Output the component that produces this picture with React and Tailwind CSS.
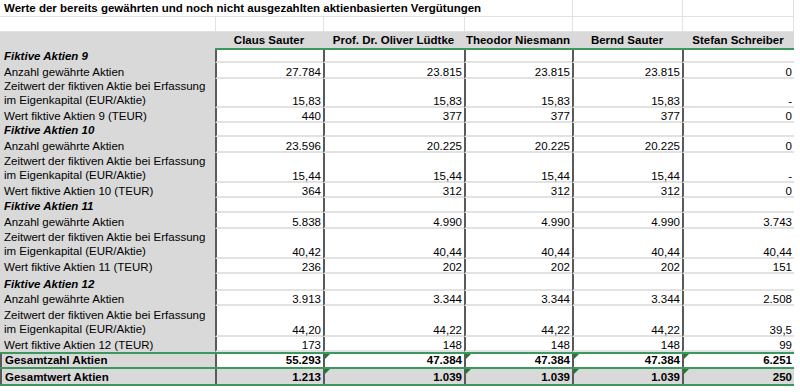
import React from "react";

const W = ["w-[108px]", "w-[141px]", "w-[108px]", "w-[110px]", "w-[112px]"];
const names = ["Claus Sauter", "Prof. Dr. Oliver Lüdtke", "Theodor Niesmann", "Bernd Sauter", "Stefan Schreiber"];

const groups = [
  {
    n: 9,
    h: ["h-[13px]", "h-[16px]", "h-[29px]", "h-[15px]"],
    a: ["27.784", "23.815", "23.815", "23.815", "0"],
    z: ["15,83", "15,83", "15,83", "15,83", "-"],
    w: ["440", "377", "377", "377", "0"],
  },
  {
    n: 10,
    h: ["h-[14px]", "h-[16px]", "h-[30px]", "h-[15px]"],
    a: ["23.596", "20.225", "20.225", "20.225", "0"],
    z: ["15,44", "15,44", "15,44", "15,44", "-"],
    w: ["364", "312", "312", "312", "0"],
  },
  {
    n: 11,
    h: ["h-[15px]", "h-[16px]", "h-[30px]", "h-[15px]"],
    a: ["5.838", "4.990", "4.990", "4.990", "3.743"],
    z: ["40,42", "40,44", "40,44", "40,44", "40,44"],
    w: ["236", "202", "202", "202", "151"],
  },
  {
    n: 12,
    h: ["h-[17px]", "h-[15px]", "h-[31px]", "h-[15px]"],
    a: ["3.913", "3.344", "3.344", "3.344", "2.508"],
    z: ["44,20", "44,22", "44,22", "44,22", "39,5"],
    w: ["173", "148", "148", "148", "99"],
  },
];

function Row({ h, label, labelClass = "", values, zeit = false }) {
  return (
    <div className={`flex ${h}`}>
      <div className={`w-[215px] shrink-0 bg-[#d9d9d9] flex items-end pl-[4px] ${labelClass}`}>
        {zeit ? (
          <div className="leading-[14px] mb-[1px]">
            <div>Zeitwert der fiktiven Aktie bei Erfassung</div>
            <div>im Eigenkapital (EUR/Aktie)</div>
          </div>
        ) : (
          <span className="leading-[12px] mb-[1px] whitespace-nowrap">{label}</span>
        )}
      </div>
      {W.map((w, i) => (
        <div
          key={i}
          className={`${w} shrink-0 bg-white border-l-2 border-l-[#5a5a5a] border-b-2 border-b-[#e2e2e2] flex items-end justify-end pr-[2px]`}
        >
          <span className="leading-[12px] -mb-[1px]">{values ? values[i] : ""}</span>
        </div>
      ))}
    </div>
  );
}

function TotalRow({ h, label, values, gray, top }) {
  return (
    <div className={`flex ${h} ${top ? "border-t-2" : ""} border-b-2 border-[#3a9a5e] w-[794px]`}>
      <div className="w-[215px] shrink-0 bg-[#d9d9d9] border-l-2 border-l-[#5a5a5a] flex items-end pl-[3px] font-bold">
        <span className="leading-[12px] mb-[1px]">{label}</span>
      </div>
      {W.map((w, i) => (
        <div
          key={i}
          className={`${w} shrink-0 relative ${gray ? "bg-[#d9d9d9]" : "bg-white"} border-l-2 border-l-[#5a5a5a] flex items-end justify-end pr-[2px] font-bold`}
        >
          {i > 0 && (
            <div className="absolute left-0 top-0 w-0 h-0 border-t-[5px] border-t-[#1e7b34] border-r-[5px] border-r-transparent" />
          )}
          <span className="leading-[12px] mb-[1px]">{values[i]}</span>
        </div>
      ))}
    </div>
  );
}

export default function App() {
  return (
    <div
      className="w-[800px] h-[392px] bg-white text-black text-[11.5px] overflow-hidden"
      style={{ fontFamily: '"Liberation Sans", Arial, sans-serif' }}
    >
      {/* title row */}
      <div className="flex h-[17px] w-[794px] border-b border-[#e2e2e2]">
        <div className="w-[572px] shrink-0 flex items-center pl-[4px] font-bold">
          <span className="leading-[12px] whitespace-nowrap">
            Werte der bereits gewährten und noch nicht ausgezahlten aktienbasierten Vergütungen
          </span>
        </div>
        <div className="w-[110px] shrink-0 border-l border-[#e2e2e2]" />
        <div className="w-[112px] shrink-0 border-l border-r border-[#e2e2e2]" />
      </div>
      {/* empty row */}
      <div className="flex h-[15px] w-[794px] border-b border-[#e2e2e2]">
        <div className="w-[215px] shrink-0" />
        {W.map((w, i) => (
          <div key={i} className={`${w} shrink-0 border-l border-[#e2e2e2] ${i === 4 ? "border-r" : ""}`} />
        ))}
      </div>
      {/* header row */}
      <div className="flex h-[16px] w-[794px] bg-[#d9d9d9] font-bold">
        <div className="w-[215px] shrink-0" />
        {W.map((w, i) => (
          <div key={i} className={`${w} shrink-0 flex items-center justify-center`}>
            <span className="leading-[12px] whitespace-nowrap">{names[i]}</span>
          </div>
        ))}
      </div>
      {/* green line */}
      <div className="flex h-[2px] w-[794px]">
        <div className="w-[215px] shrink-0 bg-[#d9d9d9]" />
        <div className="flex-1 bg-[#3a9a5e]" />
      </div>
      {groups.map((g) => (
        <React.Fragment key={g.n}>
          <Row h={g.h[0]} label={`Fiktive Aktien ${g.n}`} labelClass="font-bold italic" />
          <Row h={g.h[1]} label="Anzahl gewährte Aktien" values={g.a} />
          <Row h={g.h[2]} zeit values={g.z} />
          <Row h={g.h[3]} label={`Wert fiktive Aktien ${g.n} (TEUR)`} values={g.w} />
        </React.Fragment>
      ))}
      <TotalRow h="h-[17px]" top label="Gesamtzahl Aktien" values={["55.293", "47.384", "47.384", "47.384", "6.251"]} />
      <TotalRow h="h-[17px]" gray label="Gesamtwert Aktien" values={["1.213", "1.039", "1.039", "1.039", "250"]} />
    </div>
  );
}
